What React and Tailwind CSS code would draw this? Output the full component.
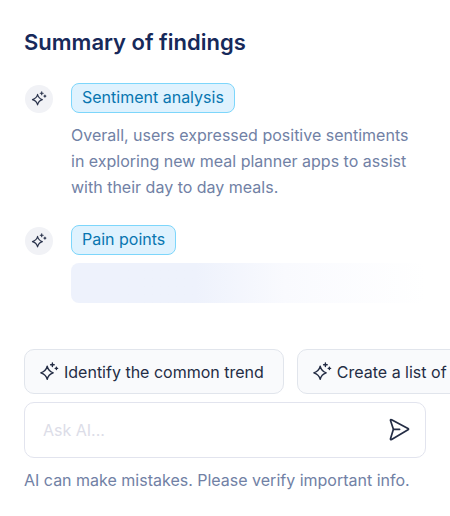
import { useState } from 'react';

const SUGGESTIONS = ['Identify the common trend', 'Create a list of'];

function SparkleIcon({ className }) {
  return (
    <svg
      viewBox="0 0 20 20"
      fill="none"
      stroke="currentColor"
      strokeWidth="1.4"
      strokeLinejoin="round"
      strokeLinecap="round"
      aria-hidden="true"
      className={className}
    >
      <path d="M8.2 4.2C9 8 10.4 9.6 14.2 10.8C10.4 12 9 13.6 8.2 17.4C7.4 13.6 5.8 12 1.8 10.8C5.8 9.6 7.4 8 8.2 4.2Z" />
      <path d="M13.4 1V4.6M11.6 2.8H15.2" />
      <path d="M17.4 5.2V7.6M16.2 6.4H18.6" />
    </svg>
  );
}

function SendIcon() {
  return (
    <svg
      viewBox="0 0 22 24"
      fill="none"
      stroke="currentColor"
      strokeWidth="1.7"
      strokeLinejoin="round"
      strokeLinecap="round"
      aria-hidden="true"
      className="h-6 w-[22px]"
    >
      <path d="M3.6 1.7L20 10.6Q21 11.2 20 11.8L3.6 21.5Q2.2 22 2.5 20.7L5.4 11.3L2.5 2.5Q2.2 1.2 3.6 1.7Z" />
      <path d="M5.6 11.3H11.6" />
    </svg>
  );
}

function Finding({ title, children }) {
  return (
    <section className="flex items-start gap-[18px]">
      <span className="mt-0.5 flex size-7 shrink-0 items-center justify-center rounded-full bg-[#f1f2f6] text-[#29324b]">
        <SparkleIcon className="size-4" />
      </span>
      <div className="min-w-0 flex-1">
        <h2 className="w-fit rounded-lg border border-[#7dd6fb] bg-[#dff2fe] px-[10px] pb-0.5 leading-[26px] text-[#0876b0]">
          {title}
        </h2>
        {children}
      </div>
    </section>
  );
}

export default function App() {
  const [prompt, setPrompt] = useState('');

  return (
    <main className="overflow-hidden bg-white px-6 py-[26px] font-['Inter',sans-serif] text-[16px] leading-[26px] text-[#7181a5]">
      <h1 className="text-[22px] font-semibold leading-8 text-[#17295a]">Summary of findings</h1>

      <div className="mt-[25px] flex flex-col gap-[25px] pl-px">
        <Finding title="Sentiment analysis">
          <p className="mt-[9px] pr-2">
            Overall, users expressed positive sentiments in exploring new meal planner apps to assist with their day
            to day meals.
          </p>
        </Finding>

        <Finding title="Pain points">
          <div
            role="status"
            aria-label="Loading pain points"
            className="mt-2 h-10 rounded-lg bg-linear-to-r from-[#eef2fc] from-35% via-[#f9fafe] via-60% to-white"
          />
        </Finding>
      </div>

      <div className="mt-[46px] flex gap-[13px]">
        {SUGGESTIONS.map((text) => (
          <button
            key={text}
            type="button"
            onClick={() => setPrompt(text)}
            className="flex h-[45px] shrink-0 items-center gap-[5px] rounded-[10px] border border-[#e1e5ec] bg-[#f9fafc] pr-[19px] pl-[14px] whitespace-nowrap text-[#242d45]"
          >
            <SparkleIcon className="size-5" />
            {text}
          </button>
        ))}
      </div>

      <form
        onSubmit={(e) => e.preventDefault()}
        className="mt-2 flex h-14 items-center rounded-[10px] border border-[#e2e4ee] bg-white pr-[15px] pl-[18px]"
      >
        <input
          type="text"
          aria-label="Ask AI"
          placeholder="Ask AI..."
          value={prompt}
          onChange={(e) => setPrompt(e.target.value)}
          className="min-w-0 flex-1 bg-transparent text-[#242d45] outline-none placeholder:text-[#dcdde8]"
        />
        <button type="submit" aria-label="Send" className="text-[#242d45]">
          <SendIcon />
        </button>
      </form>

      <p className="mt-[9px]">AI can make mistakes. Please verify important info.</p>
    </main>
  );
}
